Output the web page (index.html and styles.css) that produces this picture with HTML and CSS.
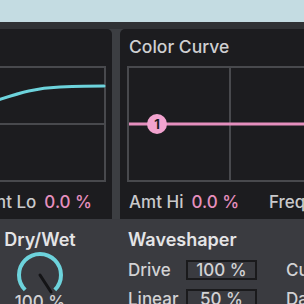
FILE: index.html
```html
<!DOCTYPE html>
<html lang="en">
<head>
    <meta charset="UTF-8">
    <title>Color Curve</title>
    <link rel="stylesheet" href="styles.css">
</head>
<body>
    <div class="topbar"></div>
    <div class="rack">
        <div class="panel panel-left">
            <svg class="graph" width="112" height="116" viewBox="0 0 112 116">
                <line x1="0" y1="1" x2="106" y2="1" class="grid" />
                <line x1="0" y1="58" x2="106" y2="58" class="grid" />
                <line x1="0" y1="115" x2="106" y2="115" class="grid" />
                <line x1="105" y1="0" x2="105" y2="116" class="grid" />
                <path d="M -2 34 C 20 27, 35 22, 60 21 S 90 20, 104 20" class="curve" />
            </svg>
            <div class="param-row shifted">
                <span class="label">Amt Lo</span>
                <span class="value">0.0 %</span>
            </div>
        </div>
        <div class="panel panel-right">
            <div class="panel-title">Color Curve</div>
            <svg class="graph" width="184" height="116" viewBox="0 0 184 116">
                <line x1="8" y1="1" x2="184" y2="1" class="grid" />
                <line x1="8" y1="115" x2="184" y2="115" class="grid" />
                <line x1="8" y1="0" x2="8" y2="116" class="grid" />
                <line x1="110" y1="0" x2="110" y2="116" class="grid" />
                <line x1="9" y1="58" x2="184" y2="58" class="pink-line" />
                <circle cx="37" cy="58" r="10" class="node" />
                <text x="37" y="63" class="node-label">1</text>
            </svg>
            <div class="param-row">
                <span class="label">Amt Hi</span>
                <span class="value">0.0 %</span>
                <span class="label freq">Freq</span>
            </div>
        </div>
    </div>
    <div class="controls">
        <div class="drywet">
            <div class="section-title">Dry/Wet</div>
            <svg class="knob" width="60" height="46" viewBox="0 0 60 46">
                <path d="M 15.2 39.8 A 21 21 0 1 1 44.8 39.8" class="knob-arc" />
                <line x1="30" y1="25" x2="41" y2="42" class="knob-needle" />
            </svg>
            <div class="knob-value">100 %</div>
        </div>
        <div class="waveshaper">
            <div class="section-title">Waveshaper</div>
            <div class="ws-grid">
                <span class="ws-label">Drive</span>
                <span class="ws-box">100 %</span>
                <span class="ws-label">Cu</span>
                <span class="ws-label">Linear</span>
                <span class="ws-box">50 %</span>
                <span class="ws-label">Da</span>
            </div>
        </div>
    </div>
</body>
</html>
```

FILE: styles.css
```css
body {
    margin: 0;
    width: 304px;
    height: 304px;
    overflow: hidden;
    background-color: #3a3b40;
    font-family: 'Inter', 'Noto Sans', sans-serif;
    color: #d2d2d4;
}
.topbar {
    height: 22px;
    background-color: #c4dce2;
}
.rack {
    display: flex;
    gap: 8px;
    height: 190px;
    padding-top: 7px;
    background-color: #3c3e42;
    box-shadow: inset 0 7px 0 #303235;
}
.panel {
    background-color: #1c1c1f;
    overflow: hidden;
    display: flex;
    flex-direction: column;
}
.panel-left {
    width: 112px;
    flex-shrink: 0;
    border-radius: 0 5px 0 0;
    padding-top: 37px;
}
.panel-right {
    flex: 1;
    border-radius: 5px 0 0 0;
    padding-top: 7px;
}
.panel-title {
    font-size: 17.5px;
    font-weight: 500;
    padding-left: 9px;
    height: 30px;
    color: #cfcfd1;
}
.graph {
    display: block;
    flex-shrink: 0;
}
.grid {
    stroke: #48494d;
    stroke-width: 2;
}
.curve {
    fill: none;
    stroke: #6dd3dc;
    stroke-width: 3;
    stroke-linecap: round;
}
.pink-line {
    stroke: #e58fbe;
    stroke-width: 3;
}
.node {
    fill: #f2a3cf;
}
.node-label {
    font-family: 'Inter', sans-serif;
    font-size: 13px;
    font-weight: 700;
    fill: #1c1c1f;
    text-anchor: middle;
}
.param-row {
    display: flex;
    gap: 8px;
    font-size: 17px;
    font-weight: 500;
    padding: 10px 0 0 9px;
    white-space: nowrap;
}
.param-row.shifted {
    margin-left: -30px;
}
.label {
    color: #c9c9cb;
}
.value {
    color: #e58fbe;
}
.freq {
    margin-left: 22px;
}
.controls {
    display: flex;
    padding-top: 10px;
}
.drywet {
    width: 80px;
    flex-shrink: 0;
    display: flex;
    flex-direction: column;
    align-items: center;
}
.section-title {
    font-size: 18px;
    font-weight: 600;
    color: #e4e4e6;
    white-space: nowrap;
}
.knob {
    display: block;
}
.knob-arc {
    fill: none;
    stroke: #6dd3dc;
    stroke-width: 4;
}
.knob-needle {
    stroke: #141416;
    stroke-width: 3;
    stroke-linecap: round;
}
.knob-value {
    font-size: 17px;
    font-weight: 500;
    margin-top: -4px;
}
.waveshaper {
    margin-left: 48px;
    flex-shrink: 0;
}
.ws-grid {
    display: grid;
    grid-template-columns: 58px 100px auto;
    row-gap: 9px;
    align-items: center;
    margin-top: 10px;
}
.ws-label {
    font-size: 17px;
    font-weight: 500;
    white-space: nowrap;
}
.ws-box {
    font-size: 17px;
    font-weight: 500;
    text-align: center;
    border: 2px solid #1a1a1c;
    height: 16px;
    line-height: 16px;
    width: 67px;
}
```
